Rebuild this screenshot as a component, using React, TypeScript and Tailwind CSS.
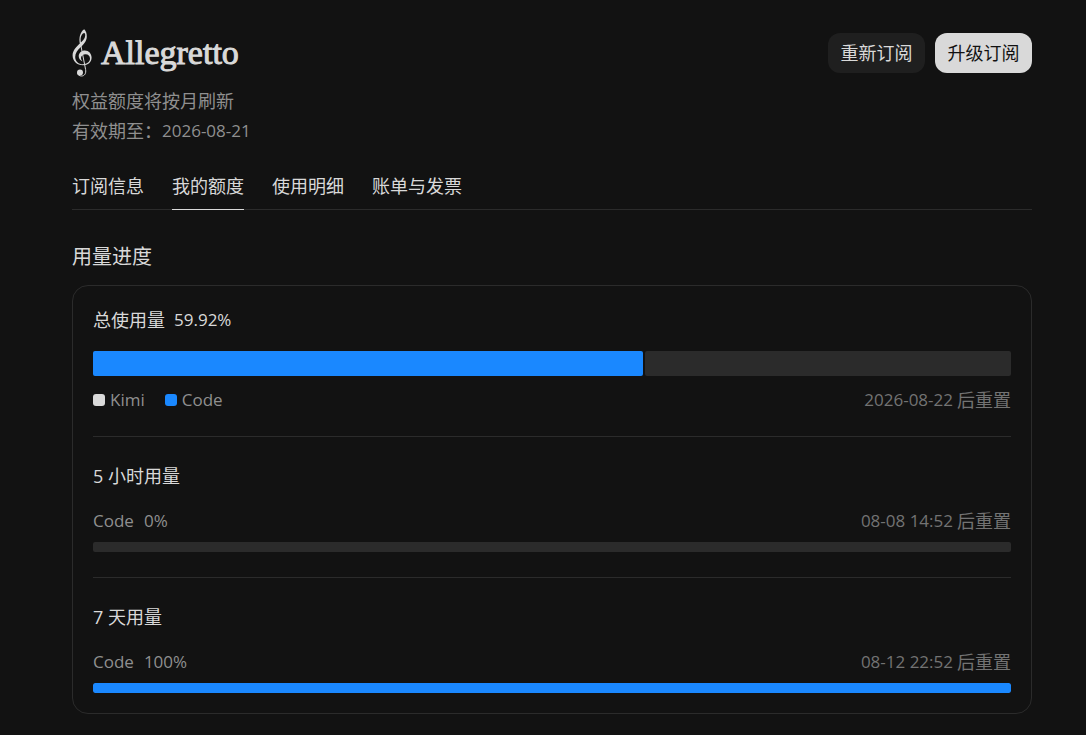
import { useState } from "react";

type Usage = {
  title: string;
  percent: number;
  date: string;
};

const tabs = ["订阅信息", "我的额度", "使用明细", "账单与发票"];

const usages: Usage[] = [
  { title: "5 小时用量", percent: 0, date: "08-08 14:52" },
  { title: "7 天用量", percent: 100, date: "08-12 22:52" },
];

const total = 59.92;

function TrebleClef() {
  return (
    <svg
      viewBox="0 0 20 48"
      className="h-12 w-5 shrink-0 text-[#d9d9d9]"
      aria-hidden="true"
    >
      <path
        fill="currentColor"
        d="M12.2 .3C14 2 15 5 14.8 8c-.2 4.5-3.3 7.5-6.5 10.6C5.6 21.3 3.2 24 3.2 28c0 4.5 3.4 7.3 7.7 7.3 4.1 0 7.1-2.5 7.1-5.7 0-2.6-1.8-4.4-4.4-4.4-2.8 0-4.6 1.8-4.6 3.8 0 1.6.8 2.7 2.2 3.6-2.7-.8-4.5-2.8-4.5-5.4 0-3.4 2.9-5.8 6.1-5.8 4 0 6.8 3.2 6.8 7.2 0 4.8-3.6 7.7-8.6 7.7-6 0-10.4-4.3-10.4-9.8 0-4.9 3.2-8.2 6.4-11.3 3.4-3.2 6-5.5 6.2-8.5.1-1.5-.3-2.6-1-2.6-1.8 0-3.6 3.3-3.6 6.3 0 1.3.2 2.5.4 3.6l-1.1.8C6.6 9.2 8.2 2.8 12.2.3Z"
      />
      <path
        fill="none"
        stroke="currentColor"
        strokeWidth="1"
        strokeLinecap="round"
        d="M8.4 14 13.6 40.5C14.3 44.5 12.5 47 9.6 47 7.8 47 6.2 46.2 5.6 44.8"
      />
      <circle cx="8" cy="43.4" r="3" fill="currentColor" />
    </svg>
  );
}

function ResetTime({ date }: { date: string }) {
  return (
    <p className="flex items-center gap-1 text-lg leading-[30px] text-[#737373]">
      <span className="text-[17px] leading-[30px]">{date}</span>
      <span>后重置</span>
    </p>
  );
}

function UsageRow({ title, percent, date }: Usage) {
  return (
    <section className="border-t border-[#2b2b2b] pt-6 pb-[25px] last:pb-0">
      <h3 className="text-lg leading-[30px]">{title}</h3>
      <div className="mt-[15px] flex items-center justify-between">
        <p className="flex gap-[10px] text-[17px] leading-[30px] text-[#8f8f8f]">
          <span>Code</span>
          <span>{percent}%</span>
        </p>
        <ResetTime date={date} />
      </div>
      <div className="mt-[6px] h-[10px] overflow-hidden rounded-xs bg-[#2b2b2b]">
        <div
          className="h-full rounded-xs bg-[#1a88ff]"
          style={{ width: `${percent}%` }}
        />
      </div>
    </section>
  );
}

export default function App() {
  const [active, setActive] = useState<string>("我的额度");

  return (
    <main className="min-h-screen bg-[#121212] pt-[29px] pr-[54px] pb-[21px] pl-[72px] font-['Open_Sans','Noto_Sans_CJK_SC',sans-serif] text-[#d9d9d9]">
      <header className="flex items-start justify-between">
        <div>
          <div className="flex items-center gap-[9px]">
            <TrebleClef />
            <h1 className="font-['Liberation_Serif',serif] text-[34px] leading-[48px] [-webkit-text-stroke:1px_#d9d9d9]">
              Allegretto
            </h1>
          </div>
          <div className="mt-[9px] text-lg leading-[30px] text-[#8f8f8f]">
            <p>权益额度将按月刷新</p>
            <p className="flex items-center">
              <span>有效期至：</span>
              <span className="text-[17px] leading-[30px]">2026-08-21</span>
            </p>
          </div>
        </div>
        <div className="mt-1 flex gap-[10px] text-lg">
          <button className="h-10 w-[97px] rounded-xl bg-[#1f1f1f]">
            重新订阅
          </button>
          <button className="h-10 w-[97px] rounded-xl bg-[#d9d9d9] text-[#121212]">
            升级订阅
          </button>
        </div>
      </header>

      <nav className="mt-[25px] flex gap-7 border-b border-[#2b2b2b]">
        {tabs.map((tab) => (
          <button
            key={tab}
            onClick={() => setActive(tab)}
            className={
              tab === active
                ? "-mb-px border-b border-[#d9d9d9] pb-2 text-lg leading-[30px]"
                : "-mb-px border-b border-transparent pb-2 text-lg leading-[30px]"
            }
          >
            {tab}
          </button>
        ))}
      </nav>

      <h2 className="mt-8 text-xl leading-[30px]">用量进度</h2>

      <div className="mt-[13px] rounded-2xl border border-[#2b2b2b] px-5 pt-[19px] pb-5">
        <section className="pb-[21px]">
          <h3 className="flex items-center gap-[9px] text-lg leading-[30px]">
            <span>总使用量</span>
            <span className="text-[17px] leading-[30px]">{total}%</span>
          </h3>
          <div className="mt-4 flex h-[25px] gap-[2px]">
            <div
              className="shrink-0 rounded-xs bg-[#1a88ff]"
              style={{ width: `${total}%` }}
            />
            <div className="flex-1 rounded-xs bg-[#2b2b2b]" />
          </div>
          <div className="mt-[9px] flex items-center justify-between">
            <div className="flex gap-5 text-[17px] leading-[30px] text-[#8f8f8f]">
              <span className="flex items-center gap-[5px]">
                <span className="size-3 rounded-[3px] bg-[#d9d9d9]" />
                Kimi
              </span>
              <span className="flex items-center gap-[5px]">
                <span className="size-3 rounded-[3px] bg-[#1a88ff]" />
                Code
              </span>
            </div>
            <ResetTime date="2026-08-22" />
          </div>
        </section>
        {usages.map((usage) => (
          <UsageRow key={usage.title} {...usage} />
        ))}
      </div>
    </main>
  );
}
